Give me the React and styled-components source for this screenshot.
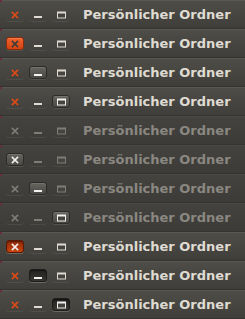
import React from "react";
import styled, { createGlobalStyle, css } from "styled-components";

const GlobalStyle = createGlobalStyle`
	html, body {
		margin: 0;
		padding: 0;
		background: #3c3b37;
	}
`;

// each row: [active, button, state]
const rows = [
	[true, null, null],
	[true, "close", "hover"],
	[true, "min", "hover"],
	[true, "max", "hover"],
	[false, null, null],
	[false, "close", "hover"],
	[false, "min", "hover"],
	[false, "max", "hover"],
	[true, "close", "pressed"],
	[true, "min", "pressed"],
	[true, "max", "pressed"]
];

const Stack = styled.div`
	width: 245px;
	display: flex;
	flex-direction: column;
`;

const TitleBar = styled.div`
	position: relative;
	height: 28px;
	display: flex;
	align-items: center;
	padding-left: 6px;
	border-bottom: 1px solid #34332f;
	background: ${p =>
		p.active
			? "linear-gradient(#4f4d48, #3f3e3a)"
			: "linear-gradient(#44433f, #3c3b37)"};
	box-shadow: inset 0 1px 0 ${p => (p.active ? "#5a5853" : "#4a4945")};

	&:before {
		content: "";
		position: absolute;
		left: 0;
		top: 0;
		width: 2px;
		height: 2px;
		background: #6e2a45;
	}
`;

const Buttons = styled.div`
	display: flex;
	gap: 5px;
	margin-top: 1px;
`;

const hoverLook = css`
	border-color: #2c2b28;
	background: linear-gradient(#66645f, #4a4945);
	box-shadow: inset 0 1px 0 #75736d, 0 1px 0 #55534e;
`;

const WinButton = styled.div`
	width: 18px;
	height: 13px;
	box-sizing: border-box;
	border-radius: 3px;
	border: 1px solid transparent;
	display: flex;
	align-items: center;
	justify-content: center;
	box-shadow: 0 1px 0 rgba(255, 255, 255, 0.07);

	${p => p.state === "hover" && hoverLook}
	${p =>
		p.state === "hover" &&
		p.kind === "close" &&
		p.active &&
		css`
			border-color: #8a2c0b;
			background: linear-gradient(#f0612a, #d24512);
			box-shadow: inset 0 1px 0 #f47a4a, 0 1px 0 #55534e;
		`}
	${p =>
		p.state === "pressed" &&
		css`
			border-color: #1d1c1a;
			background: linear-gradient(#232220, #383733);
			box-shadow: inset 0 1px 1px #151412, 0 1px 0 #6a6863;
		`}
	${p =>
		p.state === "pressed" &&
		p.kind === "close" &&
		css`
			border-color: #5a1a05;
			background: linear-gradient(#8e2a08, #c9440f);
			box-shadow: inset 0 1px 1px #5d1a04, 0 1px 0 #6a6863;
		`}
`;

const Title = styled.div`
	margin-left: 13px;
	font-family: "DejaVu Sans", sans-serif;
	font-weight: bold;
	font-size: 13px;
	color: ${p => (p.active ? "#dfdbd2" : "#8a8781")};
	white-space: nowrap;
`;

const iconColor = (kind, active, state) => {
	if (kind === "close") {
		if (active && state === "hover") return "#3c3b37";
		if (state) return "#f2f1ef";
		return active ? "#df4a16" : "#7f7d78";
	}
	if (state) return "#f2f1ef";
	return active ? "#dfdbd2" : "#7f7d78";
};

const Icon = ({ kind, color }) => {
	if (kind === "close")
		return (
			<svg width="8" height="8" viewBox="0 0 8 8">
				<path
					d="M1.5 1.5L6.5 6.5M6.5 1.5L1.5 6.5"
					stroke={color}
					strokeWidth="1.7"
					strokeLinecap="square"
				/>
			</svg>
		);
	if (kind === "min")
		return (
			<svg width="8" height="8" viewBox="0 0 8 8">
				<rect x="0" y="5" width="8" height="2" fill={color} />
			</svg>
		);
	return (
		<svg width="9" height="8" viewBox="0 0 9 8">
			<rect x="0" y="0.5" width="9" height="7" fill={color} />
			<rect x="1" y="2.5" width="7" height="4" fill="#45443f" />
		</svg>
	);
};

const Row = ({ active, button, state }) => (
	<TitleBar active={active}>
		<Buttons>
			{["close", "min", "max"].map(kind => {
				const s = kind === button ? state : null;
				return (
					<WinButton key={kind} kind={kind} state={s} active={active}>
						<Icon kind={kind} color={iconColor(kind, active, s)} />
					</WinButton>
				);
			})}
		</Buttons>
		<Title active={active}>Persönlicher Ordner</Title>
	</TitleBar>
);

export default () => (
	<>
		<GlobalStyle />
		<Stack>
			{rows.map(([active, button, state], i) => (
				<Row key={i} active={active} button={button} state={state} />
			))}
		</Stack>
	</>
);
